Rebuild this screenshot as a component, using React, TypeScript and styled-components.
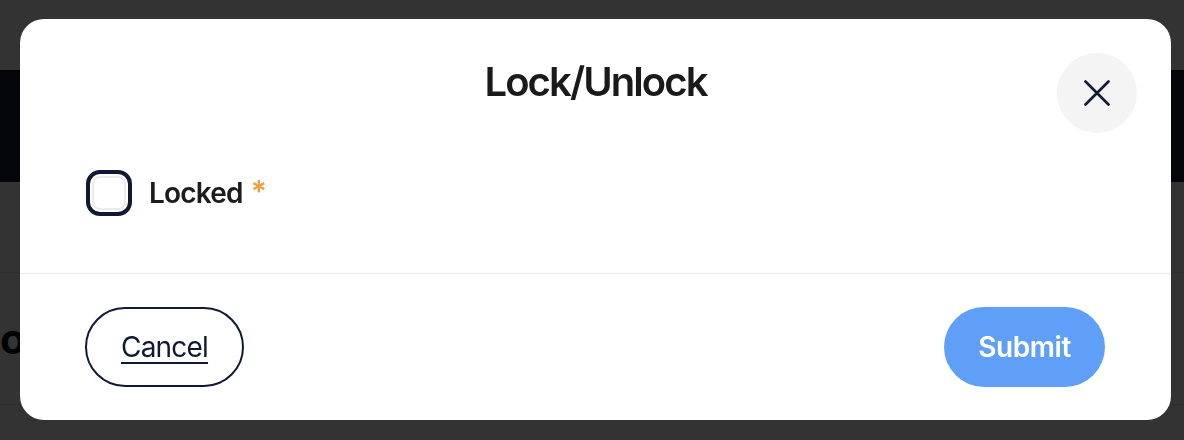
import React from "react";
import styled, { createGlobalStyle } from "styled-components";

const GlobalStyle = createGlobalStyle`
  html, body {
    margin: 0;
    padding: 0;
    background: #ffffff;
    font-family: Inter, "Noto Sans", "Liberation Sans", sans-serif;
  }
  * { box-sizing: border-box; }
`;

// page under the dialog
const Page = styled.div`
  width: 1184px;
  height: 440px;
  overflow: hidden;
  background: #ffffff;
`;

const TopBar = styled.div`
  height: 70px;
  background: #ffffff;
`;

const NavBar = styled.div`
  height: 112px;
  background: #0f1a32;
`;

const Toolbar = styled.div`
  height: 91px;
  border-bottom: 1px solid #e5e5e5;
`;

const SectionRow = styled.div`
  height: 132px;
  display: flex;
  align-items: center;
  border-bottom: 1px solid #e5e5e5;
`;

const SectionTitle = styled.h2`
  margin: 0;
  font-size: 42px;
  font-weight: 700;
  color: #111111;
`;

// dialog
const Overlay = styled.div`
  position: fixed;
  inset: 0;
  background: rgba(0, 0, 0, 0.8);
  display: flex;
  align-items: flex-start;
  padding: 19px 13px 20px 20px;
`;

const Dialog = styled.div`
  flex: 1;
  height: 401px;
  background: #ffffff;
  border-radius: 24px;
  display: flex;
  flex-direction: column;
  overflow: hidden;
`;

const Header = styled.div`
  display: grid;
  grid-template-columns: 80px 1fr 80px;
  padding: 34px 34px 0 34px;
`;

const Title = styled.h1`
  grid-column: 2;
  margin: 6px 0 0;
  text-align: center;
  font-size: 40px;
  line-height: 46px;
  font-weight: 600;
  letter-spacing: -1.9px;
  color: #1a1a1a;
`;

const CloseButton = styled.button`
  grid-column: 3;
  width: 80px;
  height: 80px;
  border-radius: 50%;
  border: none;
  background: #f4f4f4;
  display: flex;
  align-items: center;
  justify-content: center;
  padding: 0;
  cursor: pointer;
`;

const Body = styled.div`
  padding: 37px 66px 57px;
  border-bottom: 1px solid #ececec;
`;

const CheckRow = styled.label`
  display: flex;
  align-items: center;
  gap: 17px;
  height: 46px;
`;

const CheckBox = styled.span`
  width: 34px;
  height: 34px;
  margin: 6px;
  border-radius: 8px;
  border: 2px solid #ececec;
  outline: 4px solid #0f1a32;
  outline-offset: 2px;
  background: #ffffff;
`;

const LabelText = styled.span`
  font-size: 28px;
  font-weight: 600;
  letter-spacing: -0.8px;
  color: #1c1c1c;
  display: flex;
  align-items: flex-start;
  gap: 8px;
`;

const Required = styled.span`
  color: #f29d3f;
  font-size: 30px;
  font-weight: 600;
  line-height: 1;
`;

const Footer = styled.div`
  display: flex;
  justify-content: space-between;
  align-items: center;
  padding: 33px 66px 33px 65px;
`;

const PillButton = styled.button<{ $primary?: boolean }>`
  height: 80px;
  padding: 0 34px;
  border-radius: 40px;
  font-family: inherit;
  font-size: 28px;
  letter-spacing: ${(p) => (p.$primary ? "-0.4px" : "-0.8px")};
  cursor: pointer;
  border: ${(p) => (p.$primary ? "none" : "2px solid #0f1a32")};
  background: ${(p) => (p.$primary ? "#609ff7" : "#ffffff")};
  color: ${(p) => (p.$primary ? "#ffffff" : "#0f1a32")};
  font-weight: ${(p) => (p.$primary ? 600 : 400)};
  text-decoration: ${(p) => (p.$primary ? "none" : "underline")};
  text-underline-offset: 5px;
  text-decoration-thickness: 2px;
`;

function CloseIcon() {
  return (
    <svg width="26" height="26" viewBox="0 0 26 26" fill="none">
      <path
        d="M1.5 1.5 24.5 24.5M24.5 1.5 1.5 24.5"
        stroke="#0f1a32"
        strokeWidth="2.6"
        strokeLinecap="round"
      />
    </svg>
  );
}

export default function App() {
  return (
    <>
      <GlobalStyle />
      <Page>
        <TopBar />
        <NavBar />
        <Toolbar />
        <SectionRow>
          <SectionTitle>o</SectionTitle>
        </SectionRow>
      </Page>
      <Overlay>
        <Dialog>
          <Header>
            <Title>Lock/Unlock</Title>
            <CloseButton aria-label="Close">
              <CloseIcon />
            </CloseButton>
          </Header>
          <Body>
            <CheckRow>
              <CheckBox />
              <LabelText>
                Locked
                <Required>*</Required>
              </LabelText>
            </CheckRow>
          </Body>
          <Footer>
            <PillButton>Cancel</PillButton>
            <PillButton $primary>Submit</PillButton>
          </Footer>
        </Dialog>
      </Overlay>
    </>
  );
}
